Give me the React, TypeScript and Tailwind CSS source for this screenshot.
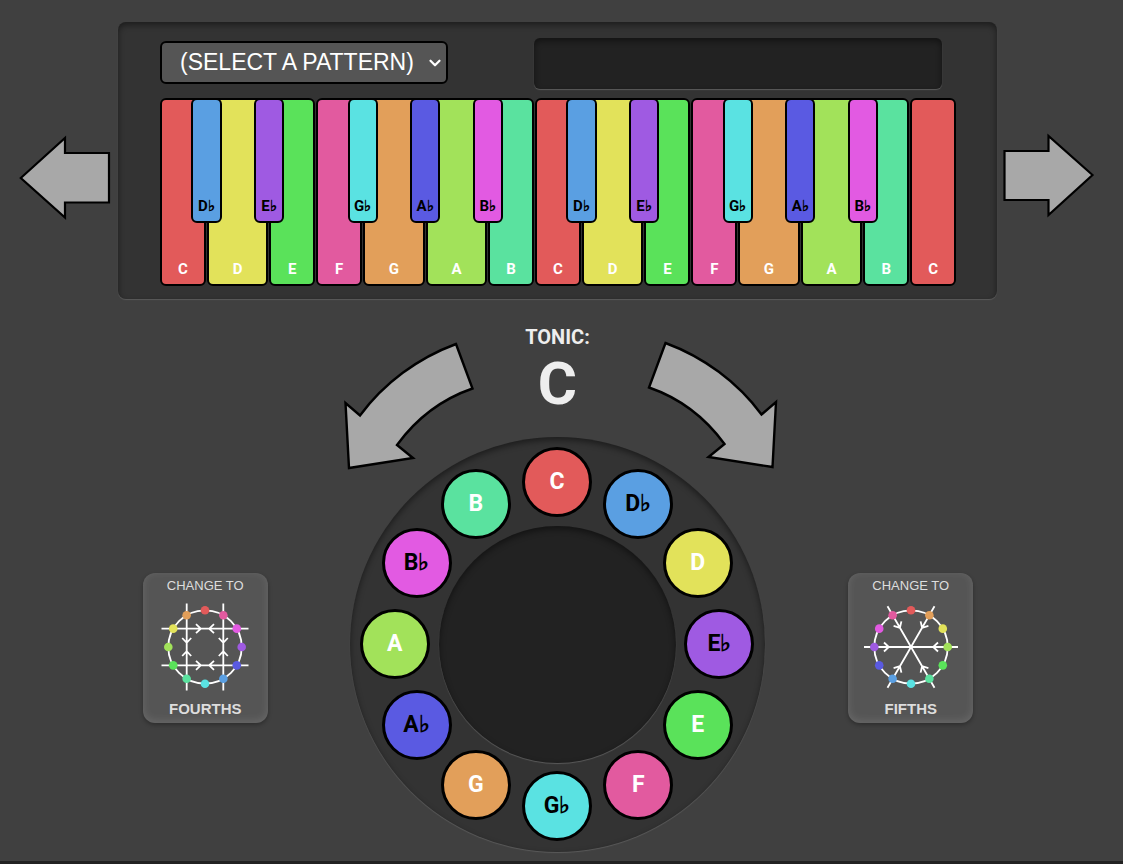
import React from "react";
import { ChevronDown } from "lucide-react";

type NoteName = "C" | "D♭" | "D" | "E♭" | "E" | "F" | "G♭" | "G" | "A♭" | "A" | "B♭" | "B";

const FILL: Record<NoteName, string> = {
  C: "bg-[#e25a5a]",
  "D♭": "bg-[#5a9fe2]",
  D: "bg-[#e2e25a]",
  "E♭": "bg-[#9f5ae2]",
  E: "bg-[#5ae25a]",
  F: "bg-[#e25a9f]",
  "G♭": "bg-[#5ae2e2]",
  G: "bg-[#e29f5a]",
  "A♭": "bg-[#5a5ae2]",
  A: "bg-[#a2e25a]",
  "B♭": "bg-[#e25ae2]",
  B: "bg-[#5ae29f]",
};

const CHROMATIC: NoteName[] = ["C", "D♭", "D", "E♭", "E", "F", "G♭", "G", "A♭", "A", "B♭", "B"];

/* Keyboard columns are half semitone units: an octave is 24 of them. */
type Key = { note: NoteName; start: number; span: number; black: boolean };
const OCTAVE: Key[] = [
  { note: "C", start: 0, span: 3, black: false },
  { note: "D♭", start: 2, span: 2, black: true },
  { note: "D", start: 3, span: 4, black: false },
  { note: "E♭", start: 6, span: 2, black: true },
  { note: "E", start: 7, span: 3, black: false },
  { note: "F", start: 10, span: 3, black: false },
  { note: "G♭", start: 12, span: 2, black: true },
  { note: "G", start: 13, span: 4, black: false },
  { note: "A♭", start: 16, span: 2, black: true },
  { note: "A", start: 17, span: 4, black: false },
  { note: "B♭", start: 20, span: 2, black: true },
  { note: "B", start: 21, span: 3, black: false },
];
const KEYS: Key[] = [
  ...OCTAVE,
  ...OCTAVE.map((k) => ({ ...k, start: k.start + 24 })),
  { note: "C", start: 48, span: 3, black: false },
];

function Keyboard() {
  return (
    <div className="grid grid-cols-[repeat(51,minmax(0,1fr))] grid-rows-[125px_63px]">
      {KEYS.map((k) => (
        <button
          key={k.start}
          type="button"
          style={{ gridColumn: `${k.start + 1} / span ${k.span}` }}
          className={`flex items-end justify-center rounded-md border-2 border-black text-[15px] leading-5 font-bold ${FILL[k.note]} ${
            k.black ? "z-10 row-start-1 mr-px pb-[5px] text-black" : "row-span-2 row-start-1 mr-px pb-[5px] text-white"
          }`}
        >
          {k.note}
        </button>
      ))}
    </div>
  );
}

function NoteWheel() {
  return (
    <div className="relative size-[415px] rounded-full bg-[#333] shadow-[inset_0_3px_6px_rgba(0,0,0,0.45),0_1px_1px_#5a5a5a]">
      <div className="absolute inset-[89px] rounded-full bg-[#222] shadow-[inset_0_3px_6px_rgba(0,0,0,0.45),0_1px_1px_#5a5a5a]" />
      {CHROMATIC.map((note, i) => {
        const a = (i * Math.PI) / 6;
        return (
          <button
            key={note}
            type="button"
            style={{
              left: `${49.9 + 39.1 * Math.sin(a)}%`,
              top: `${49.9 - 39.1 * Math.cos(a)}%`,
            }}
            className={`absolute flex size-[70px] -translate-x-1/2 -translate-y-1/2 items-center justify-center rounded-full border-[3px] border-black text-[23px] leading-7 font-bold ${FILL[note]} ${
              note.length > 1 ? "text-black" : "text-white"
            }`}
          >
            {note}
          </button>
        );
      })}
    </div>
  );
}

const DOTS = ["#e25a5a", "#e29f5a", "#e2e25a", "#a2e25a", "#5ae25a", "#5ae29f", "#5ae2e2", "#5a9fe2", "#5a5ae2", "#9f5ae2", "#e25ae2", "#e25a9f"];

function CircleDiagram({ kind }: { kind: "fourths" | "fifths" }) {
  const dir = kind === "fifths" ? 1 : -1;
  return (
    <svg viewBox="-50 -50 100 100" className="size-[100px]" fill="none" stroke="#fff" strokeWidth="1.8" aria-hidden="true">
      <circle r="36.7" />
      {kind === "fourths"
        ? [0, 90, 180, 270].map((r) => (
            <g key={r} transform={`rotate(${r})`}>
              <path d="M-43.5 -18.3H43.5M-9 -22.8L-4.2 -18.3L-9 -13.8M9 -22.8L4.2 -18.3L9 -13.8" />
            </g>
          ))
        : [0, 60, 120, 180, 240, 300].map((r) => (
            <path key={r} transform={`rotate(${r})`} d="M0 0H47M27 -4.5L22.2 0L27 4.5" />
          ))}
      {DOTS.map((c, i) => {
        const a = (i * Math.PI * dir) / 6;
        return <circle key={c} cx={36.7 * Math.sin(a)} cy={-36.7 * Math.cos(a)} r="4.3" fill={c} stroke="none" />;
      })}
    </svg>
  );
}

function ModeButton({ kind }: { kind: "fourths" | "fifths" }) {
  return (
    <button
      type="button"
      className="flex h-[150px] w-[125px] flex-col items-center rounded-xl bg-[#555] pt-[5px] font-['Liberation_Sans',Arial,sans-serif] text-[#ddd] shadow-[inset_0_-2px_8px_rgba(255,255,255,0.12),0_2px_4px_rgba(0,0,0,0.3)]"
    >
      <span className="text-[13px] leading-4">CHANGE TO</span>
      <span className="pt-[3px]">
        <CircleDiagram kind={kind} />
      </span>
      <span className="text-[15px] leading-6 font-bold">{kind === "fourths" ? "FOURTHS" : "FIFTHS"}</span>
    </button>
  );
}

function StraightArrow({ label, d }: { label: string; d: string }) {
  return (
    <button type="button" aria-label={label} className="mt-[111px] shrink-0 self-start">
      <svg viewBox="0 0 90 88" className="h-[88px] w-[90px] overflow-visible" fill="#a8a8a8" stroke="#000" strokeWidth="2.2" aria-hidden="true">
        <path d={d} />
      </svg>
    </button>
  );
}

function CurvedArrow({ label, flip }: { label: string; flip?: boolean }) {
  return (
    <button type="button" aria-label={label}>
      <svg viewBox="0 0 132 130" className="h-[130px] w-[132px] overflow-visible" fill="#a8a8a8" stroke="#000" strokeWidth="2.4" aria-hidden="true">
        <path
          transform={flip ? "translate(134.5 -1) scale(-1 1)" : "translate(3 0)"}
          d="M112 4L128.5 48.5C98 59 72 79 53 105L69 118L5 128L1.5 63L16 75.5C40 43 74 18 112 4Z"
        />
      </svg>
    </button>
  );
}

export default function App() {
  return (
    <div className="min-h-screen bg-[#404040] font-[Roboto,'Liberation_Sans',sans-serif]">
      <div className="flex min-h-screen flex-col border-b-[3px] border-[#222] pt-[22px] pr-2">
        <header className="flex justify-center gap-2 px-5">
          <StraightArrow label="Shift pattern left" d="M0.8 45L45 5V20H89V69.5H45V84.5Z" />
          <section
            aria-label="Keyboard"
            className="max-w-[879px] min-w-0 flex-1 rounded-lg bg-[#333] pt-4 pr-10 pb-[13px] pl-[42px] shadow-[inset_0_3px_6px_rgba(0,0,0,0.45),0_1px_1px_#5a5a5a]"
          >
            <div className="mb-[9px] flex items-start justify-between pr-[15px]">
              <div className="relative mt-[3px]">
                <select
                  aria-label="Pattern"
                  className="block h-[43px] w-[288px] appearance-none rounded-md border-2 border-black bg-[#555] pr-8 pl-[18px] font-['Liberation_Sans',Arial,sans-serif] text-[23px] text-white"
                >
                  <option>(SELECT A PATTERN)</option>
                </select>
                <ChevronDown
                  className="pointer-events-none absolute top-[13px] right-1 size-[18px] text-white"
                  strokeWidth={3}
                  aria-hidden="true"
                />
              </div>
              <input
                aria-label="Pattern notes"
                readOnly
                className="h-[51px] w-[408px] rounded-md bg-[#222] px-3 text-white shadow-[inset_0_3px_6px_rgba(0,0,0,0.45),0_1px_1px_#5a5a5a]"
              />
            </div>
            <Keyboard />
          </section>
          <StraightArrow label="Shift pattern right" d="M87.5 42L43.5 3V18H-0.5V67H43.5V82Z" />
        </header>

        <main className="grid grid-cols-[1fr_434px_1fr] justify-items-center pt-[26px]">
          <div className="col-start-1 row-span-2 row-start-1 mt-[248px] ml-[70px]">
            <ModeButton kind="fourths" />
          </div>
          <div className="col-start-2 row-start-1 flex w-full items-start justify-between">
            <div className="pt-[15px]">
              <CurvedArrow label="Rotate counterclockwise" />
            </div>
            <h1 className="flex flex-col items-center text-[#eee]">
              <span className="text-xl leading-[25px] font-bold">TONIC:</span>
              <span className="text-[60px] leading-[68px] font-bold">C</span>
            </h1>
            <div className="pt-[15px]">
              <CurvedArrow label="Rotate clockwise" flip />
            </div>
          </div>
          <div className="col-start-2 row-start-2 -mt-10">
            <NoteWheel />
          </div>
          <div className="col-start-3 row-span-2 row-start-1 mt-[248px] mr-[68px]">
            <ModeButton kind="fifths" />
          </div>
        </main>
      </div>
    </div>
  );
}
